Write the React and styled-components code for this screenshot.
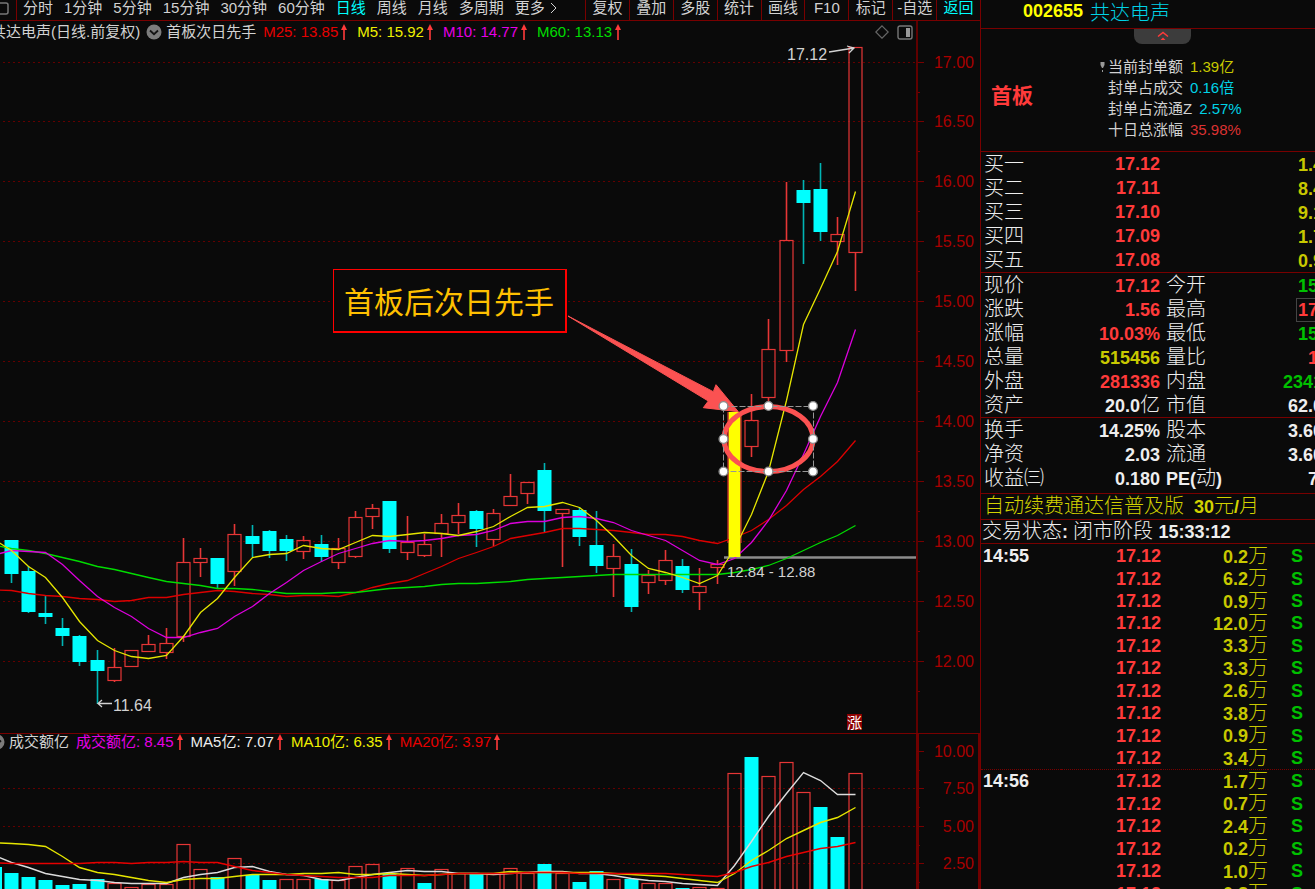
import React from 'react';
import styled, { createGlobalStyle } from 'styled-components';

const COLORS = {
  bg: '#0a0a0a',
  line: '#780000',
  axis: '#600000',
  grid: '#640000',
  scale: '#a80000',
  text: '#d2d2d2',
  white: '#eeeeee',
  red: '#ff3a3a',
  candle: '#e63636',
  pureRed: '#e60000',
  cyan: '#00ffff',
  softCyan: '#00d2e6',
  yellow: '#c8c800',
  brightYellow: '#f0f000',
  magenta: '#e600e6',
  green: '#00dc00',
  darkGreen: '#00c000',
  mark: '#fb5252',
};

const periods = ['分时', '1分钟', '5分钟', '15分钟', '30分钟', '60分钟', '日线', '周线', '月线', '多周期'];
const tools = ['复权', '叠加', '多股', '统计', '画线', 'F10', '标记', '-自选', '返回'];

const priceLegend = [
  { text: 'M25: 13.85', color: COLORS.pureRed },
  { text: 'M5: 15.92', color: COLORS.brightYellow },
  { text: 'M10: 14.77', color: COLORS.magenta },
  { text: 'M60: 13.13', color: COLORS.green },
];

const volumeLegend = [
  { text: '成交额亿: 8.45', color: COLORS.magenta },
  { text: 'MA5亿: 7.07', color: COLORS.white },
  { text: 'MA10亿: 6.35', color: COLORS.brightYellow },
  { text: 'MA20亿: 3.97', color: COLORS.pureRed },
];

const priceScale = [
  ['17.00', 62], ['16.50', 121], ['16.00', 181], ['15.50', 241], ['15.00', 301], ['14.50', 361],
  ['14.00', 421], ['13.50', 481], ['13.00', 541], ['12.50', 601], ['12.00', 661],
];
const volumeScale = [['10.00', 751], ['7.50', 788], ['5.00', 826], ['2.50', 863]];

// direction, body top, body bottom, high, low
const candles = [
  ['d', 540, 574, 540, 583], ['d', 571, 612, 566, 613], ['d', 613, 617, 595, 624], ['d', 628, 636, 618, 646],
  ['d', 636, 662, 635, 666], ['d', 660, 671, 650, 704], ['u', 667, 680, 648, 682], ['u', 650, 666, 650, 666],
  ['u', 644, 651, 635, 651], ['u', 643, 652, 628, 659], ['u', 562, 636, 538, 642], ['u', 558, 562, 548, 577],
  ['d', 558, 584, 558, 588], ['u', 534, 571, 524, 586], ['d', 536, 544, 525, 557], ['d', 531, 551, 530, 558],
  ['d', 539, 551, 535, 561], ['u', 540, 551, 536, 559], ['d', 544, 557, 535, 562], ['u', 548, 562, 538, 569],
  ['u', 517, 556, 511, 558], ['u', 508, 516, 504, 529], ['d', 501, 549, 501, 553], ['u', 542, 552, 516, 560],
  ['u', 544, 555, 534, 557], ['u', 523, 533, 514, 557], ['u', 515, 522, 503, 534], ['d', 511, 529, 510, 547],
  ['u', 513, 539, 509, 546], ['u', 496, 505, 474, 505], ['u', 482, 493, 482, 504], ['d', 470, 511, 463, 532],
  ['u', 509, 513, 509, 567], ['d', 510, 537, 507, 546], ['d', 545, 566, 511, 573], ['u', 556, 568, 544, 597],
  ['d', 564, 607, 549, 612], ['u', 575, 582, 570, 594], ['u', 560, 580, 550, 585], ['d', 566, 590, 559, 593],
  ['u', 586, 592, 568, 610], ['u', 564, 567, 560, 584], ['y', 412, 557, 412, 557], ['u', 420, 446, 394, 457],
  ['u', 349, 397, 319, 402], ['u', 240, 350, 182, 362], ['d', 190, 203, 180, 264], ['d', 189, 232, 163, 241],
  ['u', 234, 241, 217, 265], ['u', 47, 252, 47, 291],
];

const ma5 = [
  550, 566, 577, 597, 621, 640, 650, 656, 658, 655, 636, 612, 598, 577, 557, 554, 553, 545, 548, 549, 542, 535, 536,
  534, 532, 533, 535, 531, 526, 516, 507, 506, 502, 507, 520, 536, 555, 568, 572, 577, 583, 575, 548, 514, 471, 400,
  324, 288, 251, 191,
];
const ma10 = [
  550, 551, 552, 564, 580, 596, 607, 616, 628, 637, 637, 632, 628, 616, 606, 593, 582, 570, 561, 553, 548, 543, 540,
  541, 540, 538, 535, 534, 530, 523, 521, 521, 517, 516, 518, 522, 530, 535, 540, 550, 560, 564, 558, 542, 520, 490,
  454, 416, 382, 329,
];
const ma25 = [
  590, 593, 595, 596, 598, 599, 601, 600, 597, 597, 594, 592, 590, 591, 593, 594, 596, 595, 595, 596, 592, 587, 583,
  580, 573, 566, 558, 552, 546, 538, 535, 532, 528, 528, 529, 530, 532, 534, 534, 536, 540, 543, 537, 530, 519, 505,
  489, 476, 461, 440,
];
const ma60 = [
  548, 550, 553, 557, 561, 566, 569, 573, 577, 581, 583, 585, 588, 588, 589, 591, 593, 593, 593, 592, 592, 590, 588,
  587, 586, 584, 583, 583, 582, 581, 579, 578, 577, 576, 575, 574, 574, 574, 574, 574, 574, 574, 572, 569, 565, 558,
  550, 542, 535, 525,
];

const volumes = [
  ['d', 873], ['d', 877], ['d', 880], ['d', 885], ['d', 884], ['d', 879], ['u', 883], ['u', 887], ['u', 884],
  ['u', 884], ['u', 844], ['u', 869], ['d', 877], ['u', 858], ['d', 875], ['d', 880], ['u', 879], ['u', 879],
  ['d', 879], ['u', 880], ['u', 866], ['u', 864], ['d', 874], ['u', 868], ['d', 883], ['u', 869], ['u', 873],
  ['d', 874], ['u', 874], ['u', 868], ['u', 873], ['d', 864], ['u', 873], ['d', 882], ['d', 871], ['u', 879],
  ['d', 879], ['u', 883], ['u', 883], ['d', 888], ['u', 887], ['u', 888], ['u', 773], ['d', 757], ['u', 776],
  ['u', 762], ['u', 792], ['d', 807], ['d', 837], ['u', 773],
];
const vol5 = [
  862, 867, 873, 876, 879, 880, 882, 883, 883, 883, 877, 874, 872, 867, 866, 871, 874, 875, 879, 880, 877, 874, 872,
  870, 871, 871, 873, 873, 874, 873, 872, 871, 871, 873, 873, 875, 878, 880, 881, 883, 884, 885, 865, 841, 816, 793,
  772, 780, 794, 794,
];
const vol10 = [
  843, 844, 846, 856, 867, 872, 874, 877, 880, 882, 879, 878, 878, 876, 874, 874, 874, 873, 873, 872, 874, 874, 873,
  874, 875, 874, 873, 873, 873, 871, 872, 872, 872, 872, 872, 873, 874, 875, 876, 878, 880, 882, 873, 860, 850, 838,
  830, 822, 817, 807,
];
const vol20 = [
  863, 863, 863, 863, 863, 862, 862, 863, 862, 862, 861, 862, 862, 866, 870, 872, 874, 875, 876, 877, 877, 877, 875,
  875, 875, 874, 873, 873, 873, 873, 872, 872, 872, 873, 873, 873, 873, 873, 873, 874, 875, 876, 872, 866, 862, 856,
  852, 848, 846, 842,
];

const summary = [
  { label: '当前封单额', value: '1.39亿', color: COLORS.yellow },
  { label: '封单占成交', value: '0.16倍', color: COLORS.softCyan },
  { label: '封单占流通Z', value: '2.57%', color: COLORS.softCyan },
  { label: '十日总涨幅', value: '35.98%', color: '#dc3232' },
];

const bids = [
  ['买一', '17.12', '1.4'],
  ['买二', '17.11', '8.4'],
  ['买三', '17.10', '9.1'],
  ['买四', '17.09', '1.7'],
  ['买五', '17.08', '0.9'],
];

const quotes = [
  ['现价', '17.12', '', 'red', '今开', '15.41', '', 'darkGreen'],
  ['涨跌', '1.56', '', 'red', '最高', '17.12', '', 'red', true],
  ['涨幅', '10.03%', '', 'red', '最低', '15.08', '', 'darkGreen'],
  ['总量', '515456', '', 'yellow', '量比', '1.21', '', 'red'],
  ['外盘', '281336', '', 'red', '内盘', '234120', '', 'darkGreen'],
  ['资产', '20.0', '亿', 'white', '市值', '62.0', '亿', 'white'],
];

const finance = [
  ['换手', '14.25%', '', 'white', '股本', '3.60', '亿', 'white'],
  ['净资', '2.03', '', 'white', '流通', '3.60', '亿', 'white'],
  ['收益㈢', '0.180', '', 'white', <><b>PE(</b>动<b>)</b></>, '71.3', '', 'white'],
];

const ticks = [
  ['14:55', '0.2'], ['', '6.2'], ['', '0.9'], ['', '12.0'], ['', '3.3'], ['', '3.3'], ['', '2.6'], ['', '3.8'],
  ['', '0.9'], ['', '3.4'], ['14:56', '1.7'], ['', '0.7'], ['', '2.4'], ['', '0.2'], ['', '1.0'], ['', '0.8'],
];

const xAt = i => Math.floor(11 + (i * 844) / 49) + 0.5;
const toPoints = (list, first) =>
  [`-2,${first}`, ...list.map((y, i) => `${xAt(i)},${y + 0.5}`)].join(' ');

const UpArrow = () => (
  <svg width="6" height="16" viewBox="0 0 6 16" aria-hidden="true">
    <path d="M3 0L6 6H0z" fill={COLORS.red} />
    <path d="M3 4V16" stroke={COLORS.red} strokeWidth="1.6" />
  </svg>
);

const RoundChevron = () => (
  <svg width="16" height="16" viewBox="0 0 16 16" aria-hidden="true">
    <circle cx="8" cy="8" r="7.5" fill="#7c7c7c" />
    <path d="M4 6.5L8 10.2L12 6.5" fill="none" stroke="#141414" strokeWidth="1.8" />
  </svg>
);

const Scale = ({ items, minor }) =>
  items.map(([label, y]) => (
    <g key={label}>
      {label !== '10.00' && (
        <line x1="3" x2="916" y1={y + 0.5} y2={y + 0.5} stroke={COLORS.grid} strokeDasharray="2 3" />
      )}
      <path d={`M917 ${y + 0.5}H924M917 ${y + minor + 0.5}H920`} stroke={COLORS.line} />
      <ScaleText x="974" y={y + 6}>{label}</ScaleText>
    </g>
  ));

const Candle = ({ x, data }) => {
  const [type, top, bottom, high, low] = data;
  if (type === 'y') {
    return (
      <g>
        <rect x={x - 6} y={top} width="12" height={bottom - top} fill="#ffff00" />
        <path d={`M${x - 6.5} ${top}V543M${x + 6.5} ${top}V543`} stroke={COLORS.red} />
      </g>
    );
  }
  if (type === 'd') {
    return (
      <g>
        <path d={`M${x} ${high}V${low}`} stroke="#00b4b4" strokeWidth="1.6" />
        <rect x={x - 7} y={top} width="14" height={bottom - top} fill={COLORS.cyan} />
      </g>
    );
  }
  return (
    <g fill="none" stroke={COLORS.candle} strokeWidth="1.2">
      <path d={`M${x} ${high}V${top}M${x} ${bottom}V${low}`} strokeWidth="1.6" />
      <rect x={x - 6.5} y={top + 0.5} width="13" height={bottom - top} />
    </g>
  );
};

const PriceChart = () => (
  <Chart viewBox="0 45 980 688" role="img" aria-label="日线">
    <Scale items={priceScale} minor={30} />
    <rect x="916" y="45" width="2" height="688" fill={COLORS.axis} />
    {candles.map((c, i) => <Candle key={i} x={xAt(i)} data={c} />)}
    <path d="M724 557.5H916" stroke="#8c8c8c" strokeWidth="2.4" />
    <g fill="none" strokeWidth="1.3">
      <polyline points={toPoints(ma25, 590)} stroke="#dc0000" />
      <polyline points={toPoints(ma60, 546)} stroke={COLORS.green} />
      <polyline points={toPoints(ma10, 554)} stroke="#dc00dc" />
      <polyline points={toPoints(ma5, 542)} stroke="#e6e600" />
    </g>
    <rect x="729" y="412" width="11" height="145" fill="#ffff00" />

    <g stroke={COLORS.text} fill="none" strokeWidth="1.3">
      <path d="M829 52L854 48M847 46L854 48L849 53" />
      <path d="M98 703.5H112M102 700L98 703.5L102 707" />
    </g>
    <ChartText x="787" y="60">17.12</ChartText>
    <ChartText x="113" y="711">11.64</ChartText>
    <ChartText x="727" y="577" $size={15}>12.84 - 12.88</ChartText>

    <rect x="847" y="714" width="15" height="16" fill="#8c0000" />
    <ChartText x="847" y="728" $size={15} $color="#ffffff">涨</ChartText>

    <rect x="333" y="269" width="234" height="64" fill="#ff0000" />
    <rect x="334" y="270" width="231" height="61" fill={COLORS.bg} />
    <ChartText x="344" y="313" $size={30} $color="#ffc000">首板后次日先手</ChartText>

    <path
      d="M568 316L713.3 391.7L716 384.7L738.3 411.7L703.3 407.7L708.3 401Z"
      fill={COLORS.mark}
      stroke={COLORS.mark}
    />
    <ellipse cx="768.5" cy="439" rx="44.5" ry="32.5" fill="none" stroke={COLORS.mark} strokeWidth="5" />
    <rect x="723.5" y="406.5" width="90" height="65" fill="none" stroke="#969696" strokeDasharray="6 2" />
    {[[723.5, 406], [768.5, 406], [813, 406], [723.5, 439], [813, 439], [723.5, 471.5], [768.5, 471.5], [813, 471.5]].map(
      ([x, y]) => <circle key={`${x}-${y}`} cx={x} cy={y} r="4.4" fill="#fff" stroke="#8a8a8a" strokeWidth="1.4" />
    )}
  </Chart>
);

const VolumeChart = () => (
  <Chart viewBox="0 754 980 135" role="img" aria-label="成交额亿">
    <Scale items={volumeScale} minor={19} />
    <rect x="916" y="754" width="3" height="135" fill="#700000" />
    <rect x="978" y="754" width="2" height="135" fill="#700000" />
    <rect x="-12" y="867" width="14" height="24" fill={COLORS.cyan} />
    {volumes.map(([type, top], i) =>
      type === 'd' ? (
        <rect key={i} x={xAt(i) - 7} y={top} width="14" height={892 - top} fill={COLORS.cyan} />
      ) : (
        <rect
          key={i}
          x={xAt(i) - 6.5}
          y={top + 0.5}
          width="13"
          height={892 - top}
          fill="none"
          stroke={COLORS.candle}
          strokeWidth="1.2"
        />
      )
    )}
    <g fill="none" strokeWidth="1.4">
      <polyline points={toPoints(vol5, 857)} stroke="#dcdcdc" />
      <polyline points={toPoints(vol10, 843)} stroke="#e6e600" />
      <polyline points={toPoints(vol20, 863)} stroke={COLORS.pureRed} />
    </g>
  </Chart>
);

const QuoteTable = ({ rows }) => (
  <Table>
    <tbody>
      {rows.map(([label, value, unit, color, label2, value2, unit2, color2, boxed]) => (
        <tr key={label}>
          <Label scope="row">{label}</Label>
          <Value $color={COLORS[color]}>{value}<Unit>{unit}</Unit></Value>
          <Label scope="row" $second>{label2}</Label>
          <Value $color={COLORS[color2]}>
            {boxed ? <Boxed>{value2}</Boxed> : value2}
            <Unit>{unit2}</Unit>
          </Value>
        </tr>
      ))}
    </tbody>
  </Table>
);

const App = () => {
  return (
    <>
      <GlobalStyle />
      <Page>
        <Main>
          <Toolbar>
            <IconButton aria-label="窗口">
              <svg width="9" height="16" viewBox="0 0 9 16" aria-hidden="true">
                <rect x="-5" y="2" width="13" height="11" rx="2" fill="none" stroke="#777" strokeWidth="1.5" />
              </svg>
            </IconButton>
            <Periods>
              {periods.map(name => (
                <BarButton key={name} $active={name === '日线'}>{name}</BarButton>
              ))}
              <BarButton>
                更多
                <svg width="8" height="12" viewBox="0 0 8 12" aria-hidden="true">
                  <path d="M1 1L6 6L1 11" fill="none" stroke={COLORS.text} />
                </svg>
              </BarButton>
            </Periods>
            <Tools>
              {tools.map(name => (
                <ToolButton key={name} $active={name === '返回'}>{name}</ToolButton>
              ))}
            </Tools>
          </Toolbar>

          <Legend>
            <StockName>共达电声(日线.前复权)</StockName>
            <RoundChevron />
            <Indicator>首板次日先手</Indicator>
            {priceLegend.map(({ text, color }) => (
              <Average key={text} $color={color}>{text}<UpArrow /></Average>
            ))}
            <CornerIcons>
              <svg width="14" height="14" viewBox="0 0 14 14" aria-hidden="true">
                <path d="M7 0.8L13.2 7L7 13.2L0.8 7Z" fill="none" stroke="#666" strokeWidth="1.2" />
              </svg>
              <svg width="16" height="15" viewBox="0 0 16 15" aria-hidden="true">
                <rect x="1" y="1" width="14" height="13" rx="2" fill="none" stroke="#777" strokeWidth="1.4" />
                <rect x="9" y="3" width="4" height="9" fill="#999" />
              </svg>
            </CornerIcons>
          </Legend>
          <PriceChart />

          <VolumeHead>
            <Legend $small>
              <HalfIcon><RoundChevron /></HalfIcon>
              <Indicator>成交额亿</Indicator>
              {volumeLegend.map(({ text, color }) => (
                <Average key={text} $color={color} $tight>{text}<UpArrow /></Average>
              ))}
            </Legend>
          </VolumeHead>
          <VolumeChart />
        </Main>

        <Side>
          <Title>
            <Code>002655</Code>
            共达电声
          </Title>
          <Board>
            <Collapse aria-label="收起">
              <svg width="12" height="10" viewBox="0 0 12 10" aria-hidden="true">
                <path d="M1 5.5L6 1.5L11 5.5" fill="none" stroke={COLORS.red} strokeWidth="1.5" />
                <path d="M3.5 9L6 6.5L8.5 9Z" fill={COLORS.red} />
              </svg>
            </Collapse>
            <BoardBody>
              <BoardName>首板</BoardName>
              <Summary>
                {summary.map(({ label, value, color }, i) => (
                  <SummaryRow key={label}>
                    <Pin>
                      {i === 0 && (
                        <svg width="5" height="12" viewBox="0 0 5 12" aria-hidden="true">
                          <path d="M0.5 1H4.5V4L3 7H2L0.5 4ZM2 9H3V11H2Z" fill="#999" />
                        </svg>
                      )}
                    </Pin>
                    <dt>{label}</dt>
                    <SummaryValue $color={color}>{value}</SummaryValue>
                  </SummaryRow>
                ))}
              </Summary>
            </BoardBody>
          </Board>

          <Section>
            <Table>
              <tbody>
                {bids.map(([label, price, amount]) => (
                  <tr key={label}>
                    <Label scope="row">{label}</Label>
                    <Value $color={COLORS.red}>{price}</Value>
                    <Label as="td" $second />
                    <Value $color={COLORS.yellow}>{amount}<Unit>万</Unit></Value>
                  </tr>
                ))}
              </tbody>
            </Table>
          </Section>
          <Section><QuoteTable rows={quotes} /></Section>
          <Section $pad><QuoteTable rows={finance} /></Section>
          <Notice href="#renew">
            自动续费通达信普及版
            <span><b>30</b>元<b>/</b>月</span>
          </Notice>
          <Status>交易状态<b>: </b>闭市阶段 <b>15:33:12</b></Status>

          <TickTable>
            <tbody>
              {ticks.map(([time, amount], i) => (
                <TickRow key={i} $split={i > 0 && time !== ''}>
                  <Time>{time}</Time>
                  <Value $color={COLORS.red}>17.12</Value>
                  <Value $color={COLORS.yellow}>{amount}<Unit>万</Unit></Value>
                  <TradeSide>S</TradeSide>
                </TickRow>
              ))}
            </tbody>
          </TickTable>
        </Side>
      </Page>
    </>
  );
};

export default App;

const GlobalStyle = createGlobalStyle`
  * {
    box-sizing: border-box;
  }

  body {
    margin: 0;
    background: ${COLORS.bg};
    color: ${COLORS.text};
    font-family: "Liberation Sans", "Noto Sans CJK SC", sans-serif;
    font-size: 15px;
  }

  b {
    font-weight: 700;
  }

  button {
    padding: 0;
    border: 0;
    background: none;
    color: inherit;
    font: inherit;
    white-space: nowrap;
    cursor: pointer;
  }

  svg {
    flex-shrink: 0;
  }
`;

const Page = styled.div`
  display: flex;
  height: 100vh;
  overflow: hidden;
`;

const Main = styled.main`
  display: flex;
  flex-direction: column;
  flex: 1;
  min-width: 0;
  overflow: hidden;
`;

const Toolbar = styled.nav`
  display: flex;
  flex-shrink: 0;
  height: 21px;
  border-bottom: 1px solid ${COLORS.line};
  line-height: 16px;
`;

const IconButton = styled.button`
  width: 17px;
  border-right: 1px solid ${COLORS.line};
  text-align: left;
`;

const Periods = styled.div`
  display: flex;
  flex: 1;
  gap: 11px;
  padding-left: 6px;
`;

const BarButton = styled.button`
  display: flex;
  align-items: center;
  gap: 5px;
  height: 16px;
  color: ${({ $active }) => ($active ? COLORS.cyan : 'inherit')};
`;

const Tools = styled.div`
  display: grid;
  grid-template-columns: repeat(9, 1fr);
  width: 395px;
`;

const ToolButton = styled.button`
  padding-bottom: 4px;
  border-left: 1px solid ${COLORS.line};
  color: ${({ $active }) => ($active ? COLORS.cyan : 'inherit')};
`;

const Legend = styled.header`
  display: flex;
  align-items: center;
  flex-shrink: 0;
  height: ${({ $small }) => ($small ? 20 : 24)}px;
  margin-right: 62px;
  padding-bottom: ${({ $small }) => ($small ? 4 : 2)}px;
  border-right: 2px solid ${COLORS.axis};
  line-height: 16px;
  white-space: nowrap;
`;

const StockName = styled.span`
  margin: 0 6px 0 -9px;
`;

const Indicator = styled.span`
  margin: 0 7px 0 4px;
`;

const HalfIcon = styled.span`
  display: flex;
  margin-left: -11px;
`;

const Average = styled.span`
  display: flex;
  align-items: center;
  gap: 3px;
  margin-right: ${({ $tight }) => ($tight ? 8 : 10)}px;
  color: ${({ $color }) => $color};
`;

const CornerIcons = styled.span`
  display: flex;
  align-items: center;
  gap: 8px;
  margin-left: auto;
  padding-right: 3px;
`;

const VolumeHead = styled.div`
  flex-shrink: 0;
  border-top: 1px solid ${COLORS.line};
  border-right: 2px solid #700000;

  ${Legend} {
    margin-right: 59px;
    border-right: 3px solid #700000;
  }
`;

const Chart = styled.svg`
  display: block;
  width: 100%;
  overflow: visible;
`;

const ScaleText = styled.text`
  fill: ${COLORS.scale};
  font-size: 16px;
  text-anchor: end;
`;

const ChartText = styled.text`
  fill: ${({ $color }) => $color || COLORS.text};
  font-size: ${({ $size }) => $size || 16}px;
`;

const Side = styled.aside`
  width: 335px;
  flex-shrink: 0;
  overflow: hidden;
  border-left: 1px solid ${COLORS.line};
`;

const Title = styled.h1`
  display: flex;
  align-items: center;
  gap: 7px;
  height: 29px;
  margin: 0;
  padding: 0 0 5px 42px;
  border-bottom: 1px solid ${COLORS.line};
  color: ${COLORS.softCyan};
  font-size: 20px;
  font-weight: 300;
`;

const Code = styled.span`
  color: #ffff00;
  font-size: 18px;
  font-weight: 700;
`;

const Board = styled.section`
  height: 123px;
  border-bottom: 1px solid ${COLORS.line};
`;

const Collapse = styled.button`
  display: flex;
  justify-content: center;
  width: 57px;
  height: 15px;
  margin-left: 153px;
  padding-top: 2px;
  border-radius: 0 0 8px 8px;
  background: #3c3c3c;
`;

const BoardBody = styled.div`
  display: flex;
  align-items: center;
  padding: 12px 0 0 10px;
`;

const BoardName = styled.strong`
  width: 109px;
  padding-bottom: 8px;
  color: ${COLORS.red};
  font-size: 21px;
`;

const Summary = styled.dl`
  margin: 0;
  line-height: 21px;
`;

const SummaryRow = styled.div`
  display: flex;
`;

const Pin = styled.span`
  display: flex;
  align-items: center;
  width: 8px;
`;

const SummaryValue = styled.dd`
  margin: 0 0 0 7px;
  color: ${({ $color }) => $color};
`;

const Section = styled.section`
  padding-bottom: ${({ $pad }) => ($pad ? 3 : 0)}px;
  border-bottom: 1px solid ${COLORS.line};
`;

const Table = styled.table`
  width: 362px;
  table-layout: fixed;
  border-collapse: collapse;

  td,
  th {
    height: 24px;
    padding: 0;
    line-height: 20px;
    white-space: nowrap;
  }
`;

const Label = styled.th`
  width: ${({ $second }) => ($second ? 86 : 80)}px;
  color: ${COLORS.white};
  font-size: 20px;
  font-weight: 300;
  text-align: left;

  table & {
    padding-left: ${({ $second }) => ($second ? 6 : 3)}px;
  }

  b {
    font-size: 18px;
  }
`;

const Value = styled.td`
  color: ${({ $color }) => $color};
  font-size: 18px;
  font-weight: 700;
  text-align: right;

  ${Table} &:nth-child(2) {
    width: 99px;
  }
`;

const Unit = styled.span`
  font-size: 20px;
  font-weight: 300;
`;

const Boxed = styled.span`
  outline: 1px solid #444;
  outline-offset: 1px;
`;

const Notice = styled.a`
  display: flex;
  gap: 10px;
  height: 26px;
  padding-left: 3px;
  border-bottom: 1px solid ${COLORS.line};
  color: #d2d200;
  font-size: 20px;
  font-weight: 300;
  line-height: 25px;
  text-decoration: none;
  white-space: nowrap;

  b {
    font-size: 18px;
  }
`;

const Status = styled.p`
  height: 24px;
  margin: 0;
  padding-left: 1px;
  border-bottom: 1px solid ${COLORS.line};
  color: ${COLORS.white};
  font-size: 20px;
  font-weight: 300;
  line-height: 22px;
  white-space: nowrap;

  b {
    font-size: 18px;
  }
`;

const TickTable = styled.table`
  width: 334px;
  height: 360px;
  margin-top: 1px;
  table-layout: fixed;
  border-collapse: collapse;

  td {
    padding: 0;
    line-height: 20px;
    white-space: nowrap;
  }
`;

const TickRow = styled.tr`
  border-top: ${({ $split }) => ($split ? `1px dotted ${COLORS.line}` : '0')};
`;

const Time = styled.td`
  width: 80px;
  color: ${COLORS.white};
  font-size: 18px;
  font-weight: 700;

  ${TickTable} & {
    padding-left: 2px;
  }

  & + td {
    width: 100px;
  }

  & + td + td {
    width: 107px;
  }
`;

const TradeSide = styled.td`
  color: ${COLORS.darkGreen};
  font-size: 18px;
  font-weight: 700;

  ${TickTable} & {
    padding-left: 23px;
  }
`;
